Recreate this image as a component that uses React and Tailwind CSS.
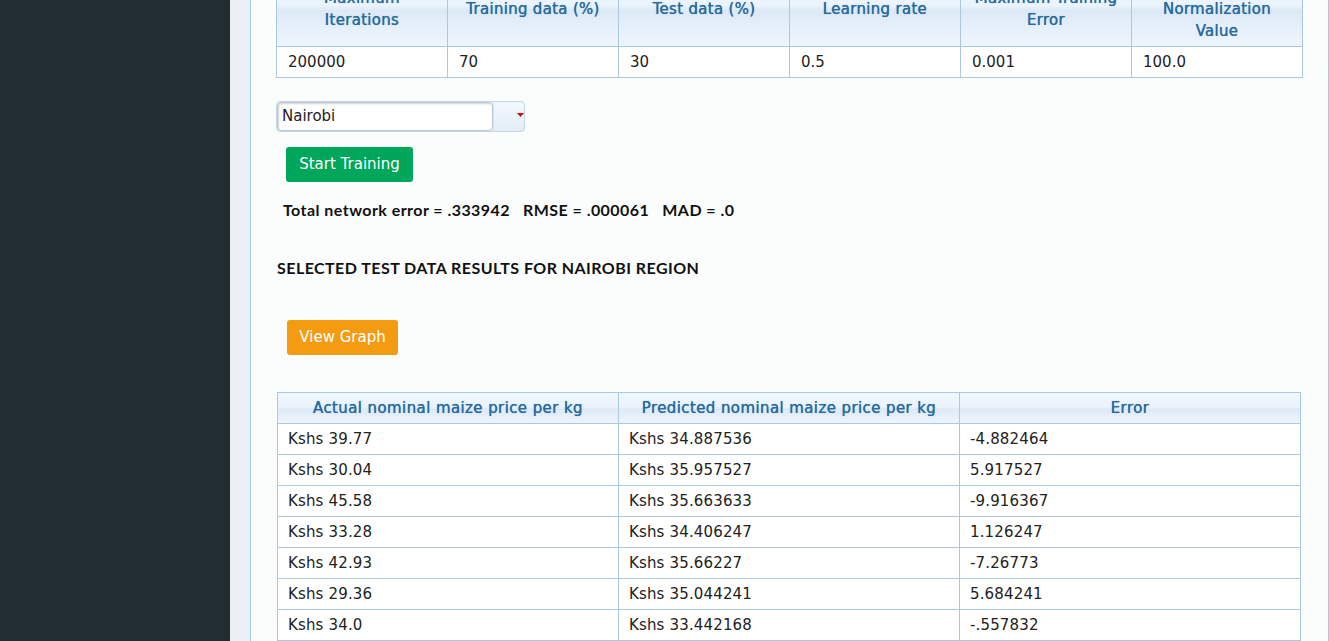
import { useState } from "react";

const params = [
  { label: ["Maximum", "Iterations"], value: "200000" },
  { label: ["Training data (%)"], value: "70" },
  { label: ["Test data (%)"], value: "30" },
  { label: ["Learning rate"], value: "0.5" },
  { label: ["Maximum Training", "Error"], value: "0.001" },
  { label: ["", "Normalization", "Value"], value: "100.0" },
];

const results = [
  ["Kshs 39.77", "Kshs 34.887536", "-4.882464"],
  ["Kshs 30.04", "Kshs 35.957527", "5.917527"],
  ["Kshs 45.58", "Kshs 35.663633", "-9.916367"],
  ["Kshs 33.28", "Kshs 34.406247", "1.126247"],
  ["Kshs 42.93", "Kshs 35.66227", "-7.26773"],
  ["Kshs 29.36", "Kshs 35.044241", "5.684241"],
  ["Kshs 34.0", "Kshs 33.442168", "-.557832"],
  ["Kshs 31.12", "Kshs 34.102233", "2.982233"],
];

const headBg =
  "bg-[linear-gradient(to_bottom,#eef6fe_0%,#ebf4fd_45%,#dde9f6_52%,#e6f0fb_75%,#eef5fd_100%)]";

export default function App() {
  const [region, setRegion] = useState("Nairobi");

  return (
    <div className="flex h-[641px] overflow-hidden font-['DejaVu_Sans',sans-serif] text-[15px] text-[#222]">
      <aside className="w-[230px] shrink-0 bg-[#222d32]" />

      <main className="flex-1 bg-[#ecf0f5] pl-[20px]">
        <div className="flow-root h-full border-x border-[#a6c9e2] bg-[#fbfdfd] pl-[25px] pr-[25px]">
          {/* page is scrolled: the header row starts above the fold */}
          <table className="-mt-[30px] w-full table-fixed border-collapse">
            <thead>
              <tr className={headBg}>
                {params.map((p, i) => (
                  <th
                    key={i}
                    className="h-[76px] border border-[#aac8e0] px-2 text-center align-middle text-[15px] font-normal leading-[22px] tracking-[0.3px] text-[#2a6a9c] [text-shadow:0_0_0.7px_#2a6a9c]"
                  >
                    {p.label.map((l, j) => (
                      <div key={j} className="h-[22px]">
                        {l}
                      </div>
                    ))}
                  </th>
                ))}
              </tr>
            </thead>
            <tbody>
              <tr className="bg-white">
                {params.map((p, i) => (
                  <td key={i} className="h-[31px] border border-[#aac8e0] px-[11px] leading-[20px]">
                    {p.value}
                  </td>
                ))}
              </tr>
            </tbody>
          </table>

          <div className="mt-[23px] flex h-[31px] w-[249px] rounded-[4px] border border-[#c5d7e6] bg-[linear-gradient(to_bottom,#f3f8fd,#e2edf8)]">
            <div className="flex flex-1 items-center rounded-[4px] border border-[#b8c8d6] bg-white px-[4px] shadow-[inset_1px_1px_2px_rgba(0,0,0,0.18)]">
              {region}
            </div>
            <button
              onClick={() => setRegion("Nairobi")}
              className="relative w-[31px] border-l border-[#d5e3f0]"
            >
              <svg className="absolute right-0 top-[11px]" width="7" height="4" viewBox="0 0 7 4">
                <path d="M0 0h7L3.5 4z" fill="#cd0a0a" />
              </svg>
            </button>
          </div>

          <button className="ml-[10px] mt-[15px] block h-[35px] w-[127px] rounded-[3px] bg-[#00a65a] text-[15px] text-white">
            Start Training
          </button>

          <p className="ml-[7px] mt-[18px] h-[20px] whitespace-pre font-['Lato',sans-serif] text-[16px] font-bold leading-[20px] tracking-[0.45px] text-[#111]">
            {"Total network error = .333942   RMSE = .000061   MAD = .0"}
          </p>

          <h3 className="ml-[1px] mt-[38px] h-[20px] font-['Lato',sans-serif] text-[16px] font-bold leading-[20px] tracking-[0.45px] text-[#111]">
            SELECTED TEST DATA RESULTS FOR NAIROBI REGION
          </h3>

          <button className="ml-[11px] mt-[42px] block h-[35px] w-[111px] rounded-[3px] bg-[#f39c12] text-[15px] text-white">
            View Graph
          </button>

          <table className="ml-px mt-[37px] w-[1024px] table-fixed border-collapse">
            <thead>
              <tr className={headBg}>
                {["Actual nominal maize price per kg", "Predicted nominal maize price per kg", "Error"].map((h) => (
                  <th
                    key={h}
                    className="h-[31px] border border-[#aac8e0] text-center text-[15px] font-normal tracking-[0.4px] text-[#2a6a9c] [text-shadow:0_0_0.7px_#2a6a9c]"
                  >
                    {h}
                  </th>
                ))}
              </tr>
            </thead>
            <tbody>
              {results.map((r, i) => (
                <tr key={i} className="bg-white">
                  {r.map((c, j) => (
                    <td key={j} className="h-[31px] border border-[#aac8e0] px-[10px] tracking-[0.15px]">
                      {c}
                    </td>
                  ))}
                </tr>
              ))}
            </tbody>
          </table>
        </div>
      </main>
    </div>
  );
}
